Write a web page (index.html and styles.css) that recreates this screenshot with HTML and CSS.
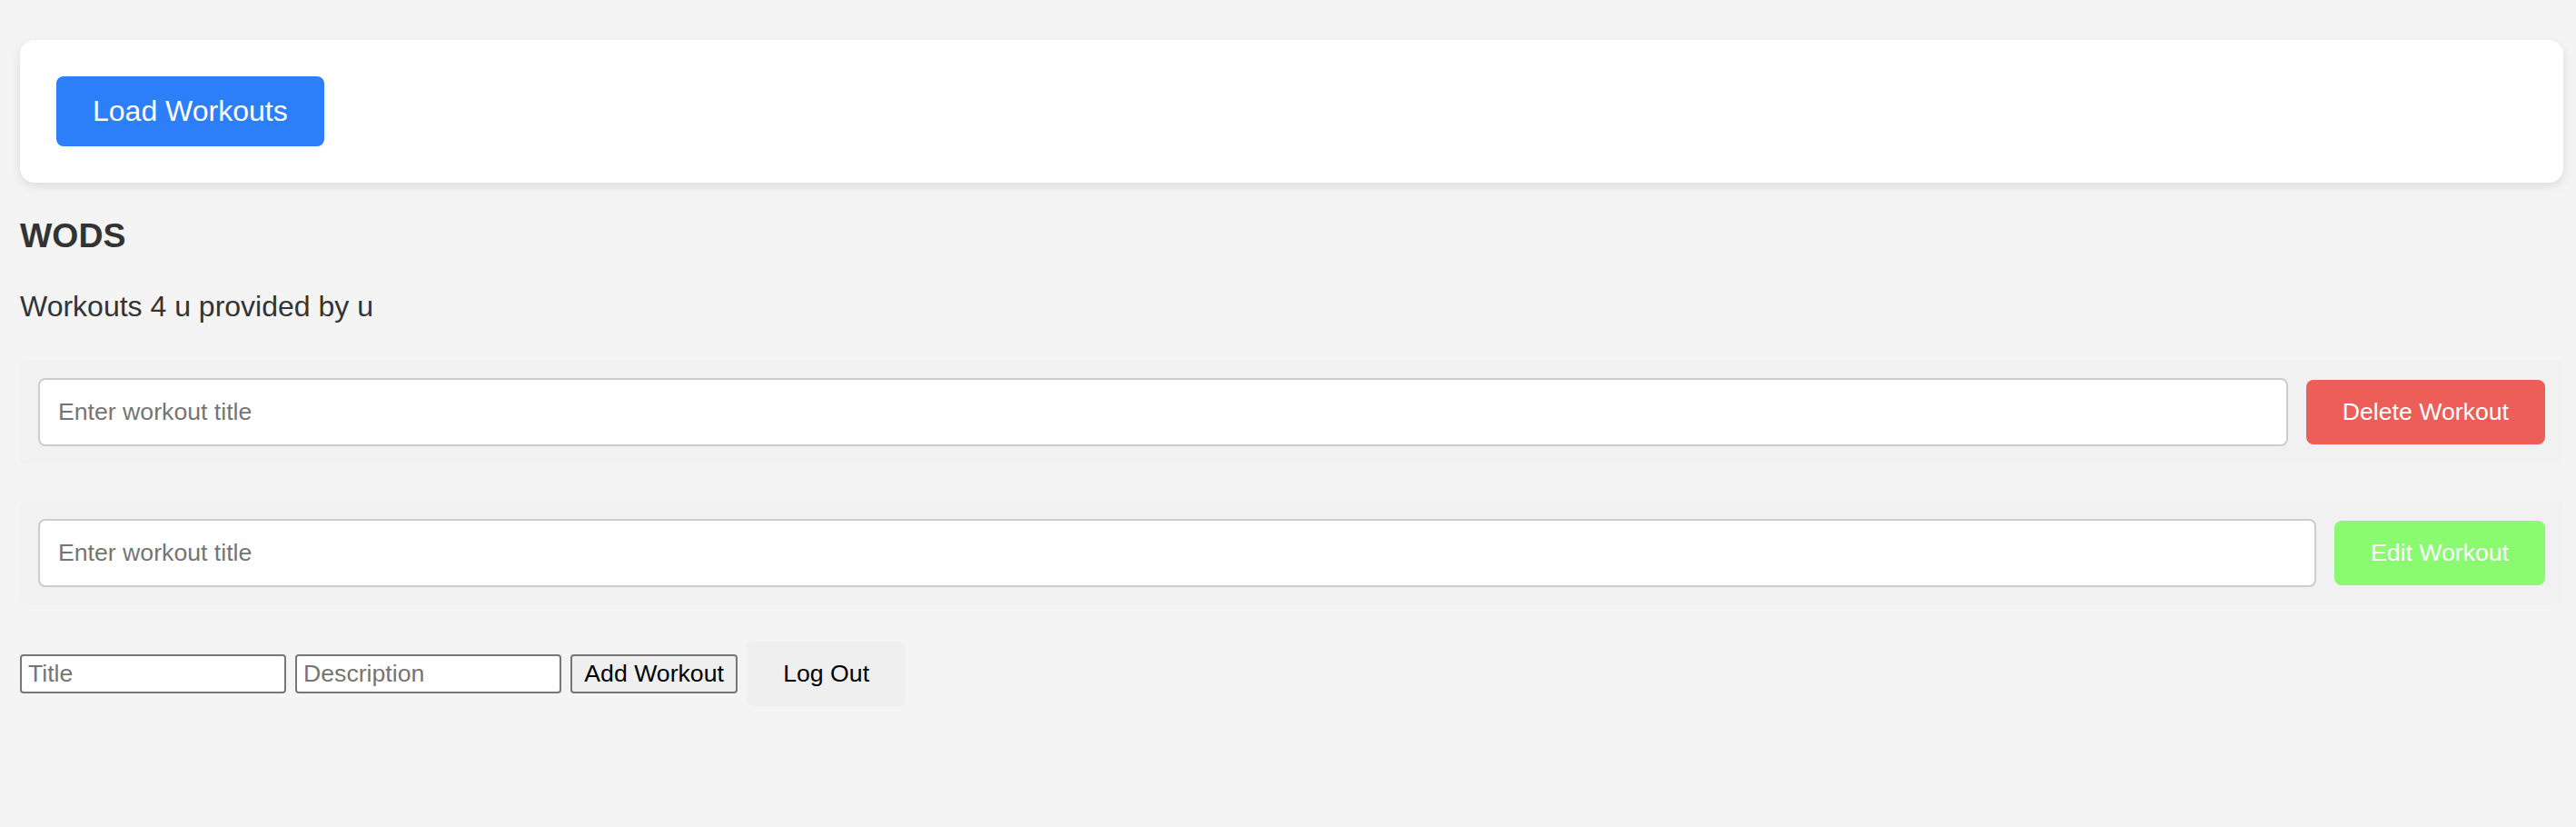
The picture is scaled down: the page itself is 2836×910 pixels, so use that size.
FILE: index.html
```html
<!DOCTYPE html>
<html lang="en">
<head>
<meta charset="utf-8">
<title>WODS</title>
<link rel="stylesheet" href="styles.css">
</head>
<body>
  <div class="card">
    <button class="btn btn-load">Load Workouts</button>
  </div>
  <h3 class="title">WODS</h3>
  <p class="subtitle">Workouts 4 u provided by u</p>

  <div class="row">
    <input class="row-input" type="text" placeholder="Enter workout title">
    <button class="btn btn-delete">Delete Workout</button>
  </div>

  <div class="row">
    <input class="row-input" type="text" placeholder="Enter workout title">
    <button class="btn btn-edit">Edit Workout</button>
  </div>

  <div class="add-form">
    <input class="plain-input" type="text" placeholder="Title">
    <input class="plain-input" type="text" placeholder="Description">
    <button class="plain-btn">Add Workout</button>
    <button class="btn btn-logout">Log Out</button>
  </div>
</body>
</html>
```

FILE: styles.css
```css
* {
  box-sizing: border-box;
}

html, body {
  margin: 0;
}

body {
  padding: 44px 14px 0 22px;
  background: #f4f4f4;
  color: #333;
  font-family: "Liberation Sans", Arial, sans-serif;
  font-size: 32px;
  min-height: 910px;
}

.card {
  background: #ffffff;
  padding: 40px;
  border-radius: 16px;
  box-shadow: 0 4px 12px rgba(0, 0, 0, 0.1);
}

.btn {
  font-family: "Liberation Sans", Arial, sans-serif;
  line-height: normal;
  border: none;
  border-radius: 8px;
  color: #ffffff;
  cursor: pointer;
}

.btn-load {
  font-size: 32px;
  padding: 20px 40px;
  background: #2d7ff9;
}

.title {
  font-size: 37.44px;
  font-weight: bold;
  margin: 37.44px 0;
  line-height: normal;
}

.subtitle {
  font-size: 32px;
  margin: 32px 0;
  line-height: normal;
}

.row {
  display: flex;
  align-items: center;
  gap: 20px;
  padding: 20px;
  margin: 40px 0;
  background: #f1f1f1;
  border-radius: 8px;
}

.row-input {
  flex: 1;
  min-width: 0;
  font-family: "Liberation Sans", Arial, sans-serif;
  font-size: 26.67px;
  line-height: normal;
  padding: 20px;
  border: 2px solid #cccccc;
  border-radius: 8px;
  background: #ffffff;
  color: #333;
}

.row-input::placeholder,
.plain-input::placeholder {
  color: #757575;
  opacity: 1;
}

.btn-delete {
  font-size: 26.67px;
  padding: 20px 40px;
  background: #ec5e57;
}

.btn-edit {
  font-size: 26.67px;
  padding: 20px 40px;
  background: #8afa70;
}

.add-form {
  display: flex;
  align-items: baseline;
  gap: 10px;
  margin-top: 40px;
}

.plain-input {
  width: 293px;
  font-family: "Liberation Sans", Arial, sans-serif;
  font-size: 26.67px;
  line-height: normal;
  padding: 3.7px 7px;
  border: 2px solid #767676;
  border-radius: 4px;
  background: #ffffff;
  color: #000;
}

.plain-btn {
  font-family: "Liberation Sans", Arial, sans-serif;
  font-size: 26.67px;
  line-height: normal;
  padding: 3.7px 13.3px;
  border: 2px solid #767676;
  border-radius: 4px;
  background: #efefef;
  color: #000;
}

.btn-logout {
  font-size: 26.67px;
  padding: 20px 40px;
  background: #efefef;
  color: #000;
}
```
